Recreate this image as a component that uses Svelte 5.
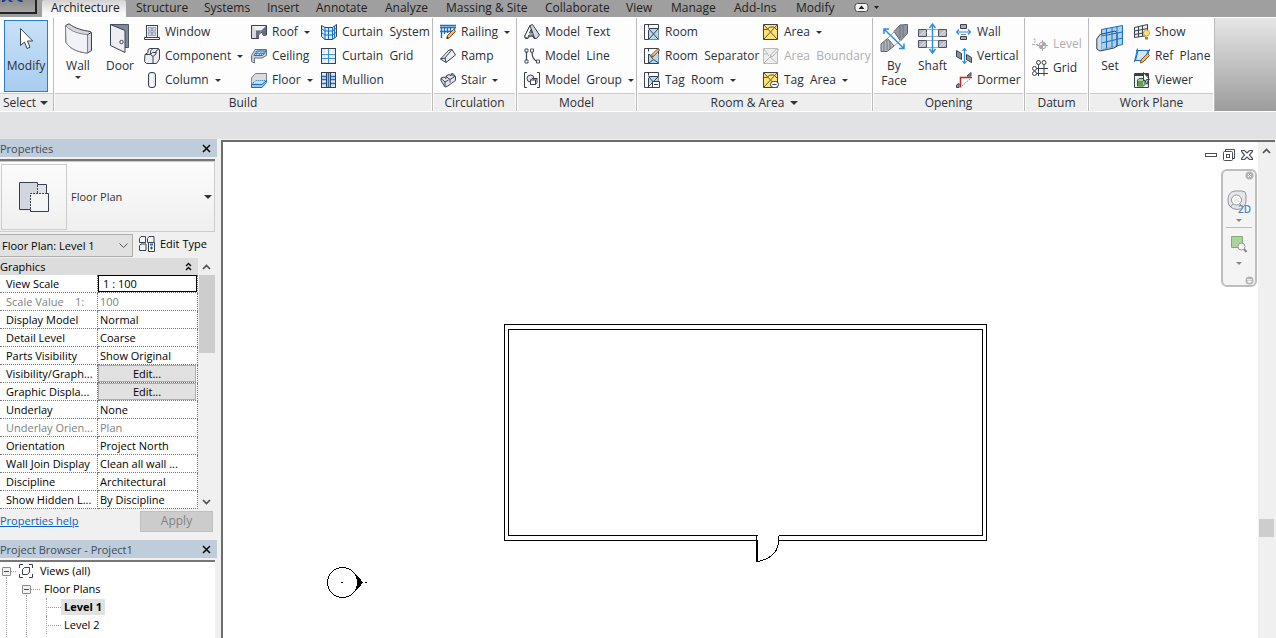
<script>
  const D = '#39404f';
  const B = '#1b6ec2';
  const glyphs = {
    window: `<rect x="2.5" y="1.5" width="11" height="12" fill="#eef0f3" stroke="${D}"/><path d="M4.5 3.5h3v3.500h-3zM8.500 3.500h3v3.500h-3zM4.500 8h3v3.500h-3zM8.500 8h3v3.500h-3z" fill="#cfd6e2" stroke="#8a92a0" stroke-width=".8"/><path d="M.5 13.500h15v2H.5z" fill="#fff" stroke="${D}"/>`,
    component: `<path d="M1 6.500 4 4.500v-3L6 .5h8.500l1 1.500v9l-3 4.500H2.500L.5 13.500z" fill="#eceef1" stroke="${D}"/><path d="M1 6.500h5.500V3l2-2M6.500 6.500l2.500 2V15M9 8.500 12 6V3l3-2M6.500 6.500 8.500 4.500H12" fill="none" stroke="${D}"/>`,
    column: `<rect x="4.500" y=".5" width="7" height="15" rx="2.500" fill="#e3e6ea" stroke="${D}"/><rect x="6.500" y="2.500" width="2.500" height="12" fill="#fff"/>`,
    roof: `<path d="M.5 1.500h15v9.500l-3 .5-2-3.500-3 3v3.500H.5z" fill="#aeb4bf" stroke="${D}"/><path d="M1 2h14l-5 4.500H5z" fill="#f1f2f5"/><path d="M1 2l4 4.500V14H1z" fill="#d7dae0"/><path d="M5 6.500h5.500L7.500 10v4H5zM15 2v9l-2.500.5L10 7z" fill="#69707f"/>`,
    ceiling: `<path d="M.5 7.500 4 1.500h11.500v6L11 10H3.500v5l-3-1.500z" fill="#c9cdd4" stroke="#6a707c"/><path d="M3 7.500 6 3h9l-3.500 4.500z" fill="#cbe6fc" stroke="${B}"/><path d="M5 5.500h8.500M7.500 3.500 5 7M10.500 3.500 8 7M13 3.500 10 7" stroke="${B}" stroke-width=".7"/>`,
    floor: `<path d="M.5 9.500V6l4-4.500h11v8L11 14.500l-10.500 1z" fill="#d9dce1" stroke="#7a808b"/><path d="M.5 12 5 8.500h10.500L11 12.500z" fill="#c2e1fb" stroke="${B}" stroke-dasharray="1 1"/><path d="M.5 12.500v3H11l4.500-5V8.500L11 12.500z" fill="#9fc9ec" stroke="${B}"/>`,
    csystem: `<path d="M.5 1.500 4 3.500h7.500L15.500.5v12l-4 3H4l-3.500-3z" fill="#d5eafb" stroke="${D}"/><path d="M4 3.500v12M7.500 3.500v12M11.500 3.500v12M13.500 2v12M1 5l3 2h7.500l4-3M1 9l3 2h7.500l4-3" fill="none" stroke="${B}"/>`,
    cgrid: `<rect x=".5" y=".5" width="14" height="15" fill="#e5e8ec" stroke="${D}"/><path d="M5.500 1v14M10.500 1v14M1 5.500h13M1 10.500h13" stroke="#fff"/><path d="M7.500 1v14M1 6.500h13M1 10.500h13" stroke="#3a8fdf"/>`,
    mullion: `<rect x=".5" y=".5" width="14" height="15" fill="#dfe5ec" stroke="${D}"/><path d="M1 4.500h13M1 7.500h13M1 11.500h13" stroke="${B}" stroke-width="1.500"/><path d="M5.500 1v14M9.500 1v14" stroke="${D}"/><path d="M6 1h3v14H6z" fill="#86bff0"/><path d="M7.500 1v14" stroke="${B}"/>`,
    railing: `<path d="M0 1.500h16M0 3.500h16M1.500 4v10M4.500 4v6M7.500 4v5M10.500 4v4M14.500 4v4M0 7.500h12" stroke="${B}" stroke-width="1.400"/><path d="m7 14.500.5-3 6-6 2 2-6 6z" fill="#f8b96a" stroke="#7d4a1b"/><path d="m6.500 15 .5-2.500 2 2z" fill="#222"/>`,
    ramp: `<path d="M.5 11 9 2l3-.5L15.500 7 6 14.500z" fill="#eceef1" stroke="${D}"/><path d="M.5 11 5 10l7-8.500M5 10l1 4.500" fill="none" stroke="${D}"/>`,
    stair: `<path d="M1 8.500V6l3-1 2 1.500V4l3-1.500 2 1.500V2l2-.5 2.500 3v4L7 14.500l-2 .5z" fill="#e4e6ea" stroke="${D}"/><path d="M1 6.500 5 10v4M6 4.500l4 3v3M11 2l4 3M5 10l3.500-2M10 7.500 14 5" fill="none" stroke="${D}"/>`,
    mtext: `<path d="M.5 12.500 6 1.500 8.500.5l7 10.500-3 3.500h-2.500L9 12l-3.500.5L4 14.500H1.500z" fill="#d4d7dd" stroke="${D}"/><path d="M.5 12.500 6 1.500l4.500 12.500L9 11H5l-1.500 3.500z" fill="#fff" stroke="${D}"/><path d="M5.500 9 7 5.500 8 9z" fill="#d4d7dd" stroke="${D}"/>`,
    mline: `<path d="M2.500 3v11M8 2.500c0 6 1 9.500 6 11" fill="none" stroke="${D}" stroke-width="1.200"/><path d="M1 1h3v3H1zM1 12h3v3H1zM6.500 1h3v3h-3zM12.500 12h3v3h-3z" fill="#fff" stroke="${D}" stroke-width=".9"/>`,
    mgroup: `<path d="M3 .5H.5v15H3M13 .5h2.500v15H13" fill="none" stroke="${D}"/><circle cx="6.500" cy="6.500" r="3.500" fill="#e4e6ea" stroke="${D}"/><path d="M6.500 8 8 6.500h5v4l-1.500 2h-5zM6.500 8h5l1.500-1.500M11.500 8v4.500" fill="#fff" stroke="${D}"/>`,
    room: `<path d="M.5.5h14v15H.5z" fill="#fff" stroke="${D}"/><path d="M4.500 4.500h10v11h-10z" fill="#b7d9ef"/><path d="M4.500.5v3M4.500 6v9.500M4.500 4.500h10M5 5l9 10M14 5 5 15" stroke="${D}" fill="none"/>`,
    roomsep: `<path d="M.5.5h14v15H.5z" fill="#fff" stroke="${D}"/><path d="M4.500 6h10v9h-10z" fill="#b7d9ef"/><path d="M4.500.5v3M4.500 6v9.500M5 15l4.500-3.500 5 3.500M5 6l4 5" stroke="${D}" fill="none"/><path d="m7.500 9 .5-2.500L14 .5 15.500 2 10 8z" fill="#f8c98a" stroke="#7d4a1b"/>`,
    tagroom: `<path d="M.5.5h14v15H.5z" fill="#fff" stroke="${D}"/><path d="M4.500 4.500h10v7h-10z" fill="#b7d9ef"/><path d="M4.500.5v3M4.500 6v9.500M4.500 4.500h10M5 5l5 6M14 5l-9 9" stroke="${D}" fill="none"/><path d="M8.500 9.500h7v6h-7z" fill="#fff" stroke="${D}"/><path d="M10 12.500h4" stroke="${D}"/>`,
    area: `<path d="M.5.5h14v15H.5z" fill="#ffe27a" stroke="${D}"/><path d="M1 1l13 14M14 1 1 15M1 5.500h3L7 3h4l3 3" stroke="#6b5a24" fill="none"/>`,
    areabound: `<path d="M.5.5h14v15H.5z" fill="#eee" stroke="#bbb"/><path d="M1 15l6-6 7 6M1 1l5 7M1 6h4" stroke="#bbb" fill="none"/><path d="m7.500 9 .5-2.500L14 .5 15.500 2 10 8z" fill="#f5f5f5" stroke="#aaa"/>`,
    tagarea: `<path d="M.5.5h14v15H.5z" fill="#ffe27a" stroke="${D}"/><path d="M1 1l13 14M14 1 1 15M1 5.500h3L7 3h4l3 3" stroke="#6b5a24" fill="none"/><rect x="7.500" y="9.500" width="8" height="6" rx="3" fill="#fff" stroke="${D}"/><path d="M9.500 12.500h4" stroke="${D}"/>`,
    owall: `<path d="M4.500.5h6v4h-6zM4.500 12.500h6v3h-6z" fill="#a6abb4" stroke="${D}"/><path d="M5 10.500h5" stroke="#888"/><path d="M0 8h15M3 5.500 .5 8 3 10.500M12 5.500 14.500 8 12 10.500" stroke="#2b8ae8" stroke-width="1.200" fill="none"/>`,
    overt: `<path d="m.5 2.500 5 3v6l-5-3zM10.500 6.500l5 3v5l-5-3z" fill="#8c929d" stroke="${D}"/><path d="M8.500 1v14M6.500 3l2-2.500 2 2.500M6.500 13l2 2.500 2-2.500" stroke="#2b8ae8" stroke-width="1.200" fill="none"/>`,
    dormer: `<path d="m11 4 4-3.500V4zM.5 15.500V13L3 11.500v4z" fill="#9da2ac" stroke="${D}"/><path d="M4.500 15.500V5.500H16" stroke="#c3261d" stroke-width="1.500" fill="none"/><path d="m6 14 8-7" stroke="#999" stroke-dasharray="2 1"/>`,
    level: `<path d="M0 8.500h6M1.500 3.500 3 2.500V7" stroke="#aaa" fill="none" stroke-dasharray="3 1"/><circle cx="10.500" cy="9.500" r="3.500" fill="#f3f3f3" stroke="#aaa"/><path d="M7 9.500h3.500V6A3.500 3.500 0 0 1 14 9.500h-3.500V13A3.500 3.500 0 0 1 7 9.500z" fill="#aaa"/><path d="M10.500 4v11M5 9.500h11" stroke="#aaa"/>`,
    grid: `<path d="M6.500 4v12M12 4v12M4 8.500h12M4 13.500h12" stroke="${D}"/><g fill="#fff" stroke="${D}"><circle cx="6.500" cy="2.500" r="2"/><circle cx="12" cy="2.500" r="2"/><circle cx="2.500" cy="8.500" r="2"/><circle cx="2.500" cy="13.500" r="2"/></g>`,
    show: `<path d="M.5 3.500 13.500.5v11l-13 2z" fill="#eceef1" stroke="${D}"/><path d="M4.500 3v10M8.500 2v10M.5 7l13-2.500M.5 10.500 12 8.500" stroke="${D}" fill="none"/><circle cx="12.500" cy="9" r="3" fill="#ffe27a" stroke="#ec9a2e"/><path d="M11 13h3v2.500h-3z" fill="#7b8594"/>`,
    refplane: `<path d="M4 2.500h10L11 12.500H1.500z" fill="#cfe7fa" stroke="${B}"/><path d="M3.500.5.5 14M15.500 1 14 6M2 2.500h14M0 12.500h7" stroke="${B}" fill="none"/><path d="m6.500 15 .5-3 6.500-6.500 2 2L9 14z" fill="#f8b96a" stroke="#7d4a1b"/>`,
    viewer: `<path d="M.5 1.500h14v14H.5z" fill="#eef1ee" stroke="${D}"/><path d="M1 2.500h13" stroke="${D}" stroke-width="3"/><path d="M3.500 8 5 6.500h6v6L9.500 14h-6z" fill="#a9d59e" stroke="#2f5b2a"/><path d="M4 9h5v4.500H4z" fill="#5d9e50"/><path d="m9.500.5 6 7h-3l1.500 4-1.500.5-1.500-4L9.500 9z" fill="#fff" stroke="${D}"/>`
  };
  const big = {
    modify: `<path d="M10.500 2.500v17l4-3.500 2.500 6.500 3-1.300-2.600-6.200h5.300z" fill="#fff" stroke="#3c4454"/>`,
    wall: `<path d="M1.500 2.500 5 .8C11 5.500 19 7.500 26.500 8.500l1 1.500v17.500l-4 2.500C15 29.500 6 26 2 19.500z" fill="#d5d9df" stroke="${D}"/><path d="M1.500 2.500C7 8.500 15 11 23.500 11.500V30C15 29.500 6 26 2 19.500z" fill="#f1f2f5" stroke="#7e8591"/><path d="m23.500 11.500 4-2" stroke="${D}"/>`,
    door: `<path d="M4.500 1.500h18v23h-4V8z" fill="#828997" stroke="#4d5463"/><path d="M4.500 1.500 19 7.500v22L4.500 22.500z" fill="#eceef1" stroke="${D}"/><circle cx="15.500" cy="19" r="1.700" fill="#fff" stroke="${D}"/>`,
    byface: `<path d="M14 8.500 20 2l7.500-.5v9L20.500 18z" fill="#9297a1" stroke="#5d6370"/><path d="M1 21 7.500 15.500 14 23l-7 5.500H1z" fill="#b3b7bf" stroke="#5d6370"/><path d="M20 3v12M23 2v12M4 19v9M7 17v10M10 18v8" stroke="#70757f"/><path d="m8 15 7-7M14 23l7-6" stroke="#aaa"/><path d="M4.500 6.500 24 25.500M4 11V6h5M24 20.500v5h-5" stroke="#2b8ae8" stroke-width="1.500" fill="none"/>`,
    shaft: `<g fill="#b3b7bf" stroke="#4d5463"><path d="M.5 6.500h8v7h-8zM20.500 6.500h8v7h-8zM.5 17.500h8v7h-8zM20.500 17.500h8v7h-8z"/></g><path d="m2 12.500 5-5M5 12.500l3-3M22 12.500l5-5M25 12.500l3-3M2 23.500l5-5M5 23.500l3-3M22 23.500l5-5M25 23.500l3-3" stroke="#f3f3f3"/><path d="M9 6.500h11M9 13.500h11M9 17.500h11M9 24.500h11" stroke="#aaa"/><path d="M14.500 1.500v28M11.500 5l3-4 3 4M11.500 26l3 4 3-4" stroke="#2b8ae8" stroke-width="1.400" fill="none"/>`,
    set: `<path d="M5.500 6.500 26.500 2.500v19l-21 5z" fill="#a9d3f3" stroke="${B}"/><path d="M.8 16 4 11.500l15-3.500 2 2v13l-3 2-14 3-3.200-2z" fill="#b4cfe6" fill-opacity=".7" stroke="${D}"/><path d="M10.500 5.500v20M16 4.500v20M21 3.500v20M5.500 13l21-4M5.500 20l21-5" stroke="${B}" fill="none"/>`
  };
  const svg = (body, w, h) => `<svg width="${w}" height="${h}" viewBox="0 0 ${w} ${h}" aria-hidden="true" style="display:block">${body}</svg>`;

  const tabs = ['Architecture', 'Structure', 'Systems', 'Insert', 'Annotate', 'Analyze', 'Massing & Site', 'Collaborate', 'View', 'Manage', 'Add-Ins', 'Modify'];
  const panels = [
    { id: 'build', title: 'Build', large: [['wall', 'Wall', true], ['door', 'Door']], cols: [
      [['window', 'Window'], ['component', 'Component', 1], ['column', 'Column', 1]],
      [['roof', 'Roof', 1], ['ceiling', 'Ceiling'], ['floor', 'Floor', 1]],
      [['csystem', 'Curtain  System'], ['cgrid', 'Curtain  Grid'], ['mullion', 'Mullion']]] },
    { id: 'circulation', title: 'Circulation', large: [], cols: [[['railing', 'Railing', 1], ['ramp', 'Ramp'], ['stair', 'Stair', 1]]] },
    { id: 'model', title: 'Model', large: [], cols: [[['mtext', 'Model  Text'], ['mline', 'Model  Line'], ['mgroup', 'Model  Group', 1]]] },
    { id: 'room', title: 'Room & Area', menu: true, large: [], cols: [
      [['room', 'Room'], ['roomsep', 'Room  Separator'], ['tagroom', 'Tag  Room', 1]],
      [['area', 'Area', 1], ['areabound', 'Area  Boundary', 0, true], ['tagarea', 'Tag  Area', 1]]] },
    { id: 'opening', title: 'Opening', large: [['byface', 'By Face'], ['shaft', 'Shaft']], cols: [[['owall', 'Wall'], ['overt', 'Vertical'], ['dormer', 'Dormer']]] },
    { id: 'datum', title: 'Datum', large: [], cols: [[['level', 'Level', 0, true], ['grid', 'Grid']]] },
    { id: 'workplane', title: 'Work Plane', large: [['set', 'Set']], cols: [[['show', 'Show'], ['refplane', 'Ref  Plane'], ['viewer', 'Viewer']]] }
  ];
  const rows = [
    ['View Scale', '1 : 100', 'input'],
    ['Scale Value    1:', '100', 'off'],
    ['Display Model', 'Normal'],
    ['Detail Level', 'Coarse'],
    ['Parts Visibility', 'Show Original'],
    ['Visibility/Graph...', 'Edit...', 'button'],
    ['Graphic Displa...', 'Edit...', 'button'],
    ['Underlay', 'None'],
    ['Underlay Orien...', 'Plan', 'off'],
    ['Orientation', 'Project North'],
    ['Wall Join Display', 'Clean all wall ...'],
    ['Discipline', 'Architectural'],
    ['Show Hidden L...', 'By Discipline']
  ];
  let active = $state('Architecture');
</script>

<div class="app">
  <header>
    <nav class="tabs" aria-label="Ribbon tabs">
      <button class="logo" aria-label="Application menu">{@html svg('<path d="M2 0h4L4 2H2zM8 0h3l2 2h-3zM17 0h5l1 2h-3z" fill="#193a94"/>', 34, 12)}</button>
      {#each tabs as t}
        <button class="tab" class:active={active === t} onclick={() => (active = t)}>{t}</button>
      {/each}
      <button class="collapse" aria-label="Minimize ribbon">{@html svg('<rect x="1" y="1.500" width="13" height="8" rx="2.500" fill="#f2f2f2" stroke="#454b58"/><path d="m4.500 7 3-3.500 3 3.500zM20 4h5l-2.500 3z" fill="#222"/>', 26, 11)}</button>
    </nav>

    <div class="ribbon">
      <section class="panel select">
        <div class="body">
          <button class="modify">{@html svg(big.modify, 32, 26)}<span>Modify</span></button>
        </div>
        <h2>Select <i class="arrow wide"></i></h2>
      </section>
      {#each panels as p}
        <section class="panel {p.id}">
          <div class="body">
            {#each p.large as [icon, label, menu]}
              <button class="large">{@html svg(big[icon], 29, 32)}<span>{label}</span>{#if menu}<i class="arrow"></i>{/if}</button>
            {/each}
            {#each p.cols as col}
              <div class="col">
                {#each col as [icon, label, menu, off]}
                  <button class="tool" disabled={off}>{@html svg(glyphs[icon], 16, 16)}<span>{label}</span>{#if menu}<i class="arrow"></i>{/if}</button>
                {/each}
              </div>
            {/each}
          </div>
          <h2>{p.title}{#if p.menu}<i class="arrow wide"></i>{/if}</h2>
        </section>
      {/each}
    </div>
    <div class="options"></div>
  </header>

  <main>
    <aside>
      <section class="dock">
        <div class="caption"><h3>Properties</h3><button aria-label="Close Properties">{@html svg('<path d="m1 1 7 7M8 1 1 8" stroke="#000" stroke-width="1.500"/>', 9, 9)}</button></div>
        <div class="props">
          <button class="type">
            <span class="preview">{@html svg('<path d="M2.500 2.500h18v28h-18z" fill="#d3d6dd"/><path d="M20.500 4.500h9v9h-9z" fill="#dfe2e8"/><path d="M13.500 13.500h18v18h-18z" fill="#f4f5f7"/><path d="M13.500 29.500h-11v-27h18v2h9v9M29.500 13.500h2v18h-18v-2" fill="none" stroke="#39404f"/><path d="M20.500 5v8M13.500 29V13.500H30" fill="none" stroke="#39404f" stroke-dasharray="2 1"/>', 34, 34)}</span>
            <span class="name">Floor Plan</span><i class="arrow wide"></i>
          </button>
          <div class="instance">
            <div class="combo">
              <select aria-label="Instance"><option>Floor Plan: Level 1</option></select>
              {@html svg('<path d="m.5.5 4 4 4-4" fill="none" stroke="#555"/>', 9, 6)}
            </div>
            <button class="edit-type">{@html svg(`<path d="M.5 2.500 2 .5h4.500v6h-6zM8.500 2.500 10 .5h5v6H8.500zM.5 9.500 2 8h5v6.500H.5z" fill="#f4f5f7" stroke="${D}"/><path d="M9.500 6.500h6v9h-6z" fill="#fff" stroke="${D}"/><path d="M11 8.500h3" stroke="${B}" stroke-width="2"/><path d="M11 12h3M12.500 10.500v3" stroke="${D}"/>`, 16, 16)}<span>Edit Type</span></button>
          </div>
          <div class="listing">
            <div class="sheet">
              <div class="group">Graphics<button aria-label="Collapse Graphics">{@html svg('<path d="m1 4 2.500-2.500L6 4M1 8l2.500-2.500L6 8" fill="none" stroke="#000" stroke-width="1.300"/>', 7, 9)}</button></div>
              <table>
                <tbody>
                  {#each rows as [name, value, kind]}
                    <tr class:off={kind === 'off'}>
                      <th scope="row">{name}</th>
                      <td>
                        {#if kind === 'input'}<input aria-label={name} {value} />
                        {:else if kind === 'button'}<button>{value}</button>
                        {:else}{value}{/if}
                      </td>
                    </tr>
                  {/each}
                </tbody>
              </table>
            </div>
            <div class="scroll">
              {@html svg('<path d="m1 5 3.500-3.500L8 5" fill="none" stroke="#505050" stroke-width="1.700"/>', 9, 6)}
              <div class="thumb"></div>
              {@html svg('<path d="m1 1 3.500 3.500L8 1" fill="none" stroke="#505050" stroke-width="1.700"/>', 9, 6)}
            </div>
          </div>
          <div class="foot"><a href="#help">Properties help</a><button disabled>Apply</button></div>
        </div>
      </section>

      <section class="dock browser">
        <div class="caption"><h3>Project Browser - Project1</h3><button aria-label="Close Project Browser">{@html svg('<path d="m1 1 7 7M8 1 1 8" stroke="#000" stroke-width="1.500"/>', 9, 9)}</button></div>
        <ul class="tree">
          <li>
            <div class="node"><button class="toggle" aria-label="Collapse Views"></button><i class="stub short"></i>{@html svg(`<path d="M4 .5H.5V4M10 .5h3.500V4M4 13.500H.5V10M10 13.500h3.500V10" fill="none" stroke="${D}"/><path d="M3.500 5.500 5.500 3.500h5v4.500l-2 2.500h-5z" fill="#fff" stroke="${D}"/>`, 14, 14)}<span class="views">Views (all)</span></div>
            <ul>
              <li>
                <div class="node"><button class="toggle" aria-label="Collapse Floor Plans"></button><i class="stub"></i><span>Floor Plans</span></div>
                <ul>
                  <li><div class="node"><i class="stub long"></i><b>Level 1</b></div></li>
                  <li><div class="node"><i class="stub long"></i><span class="leaf">Level 2</span></div></li>
                </ul>
              </li>
            </ul>
          </li>
        </ul>
      </section>
    </aside>

    <div class="view">
      <div class="canvas">
        <svg class="drawing" aria-label="Level 1 floor plan" shape-rendering="crispEdges">
          <g fill="none" stroke="#000">
            <path d="M534.500 398.500H281.500V182.500H763.500V398.500H555.500M534.500 393.500H285.500V187.500H759.500V393.500H555.500M555.500 393.500V399M533.500 393.500V399"/>
            <path d="M534 398.500V420" stroke-width="2"/>
            <path d="M535 419.500Q555.500 415 555.500 398.500"/>
            <circle cx="119.500" cy="440.500" r="15"/>
            <path d="M118 440.500h2M142 440.500h2"/>
          </g>
          <path d="m133 432 7 8.500-7 8.500q3-8.500 0-17z"/>
        </svg>
        <div class="controls">
          <button aria-label="Minimize view">{@html svg('<rect x=".5" y="4.500" width="11" height="3" fill="#fff" stroke="#4b4f58"/>', 12, 12)}</button>
          <button aria-label="Restore view">{@html svg('<path d="M2.500 2.500v-2h9v9h-2" fill="#fff" stroke="#4b4f58"/><rect x=".5" y="2.500" width="9" height="9" rx="1" fill="#fff" stroke="#4b4f58"/><rect x="3.500" y="5.500" width="3" height="3" fill="none" stroke="#4b4f58"/>', 12, 12)}</button>
          <button aria-label="Close view">{@html svg('<path d="M.5 1.500h3L6 4l2.500-2.500h3v1L8.500 6l3 3.500v1h-3L6 8l-2.500 2.500h-3v-1l3-3.500-3-3.500z" fill="#fff" stroke="#4b4f58" stroke-width="1.200"/>', 12, 12)}</button>
        </div>
        <div class="navbar">
          <button aria-label="Close navigation bar">{@html svg('<circle cx="4.500" cy="4.500" r="4" fill="#b5b5b5"/><path d="m3 3 3 3M6 3 3 6" stroke="#fff"/>', 9, 9)}</button>
          <button class="wheel" aria-label="Steering wheel 2D">{@html svg('<path d="M1 10.500C1 4 4 1 9.500 1H15q4 0 4 4v6q-1 8-9 8.500-9-1-9-9z" fill="#e6e7ea" stroke="#8f949c"/><circle cx="9.500" cy="10" r="5" fill="#fff" stroke="#8f949c"/><circle cx="9.500" cy="10" r="3" fill="#eee"/><path d="m6 14-2.500 3M13 14l2 2" stroke="#8f949c"/>', 24, 24)}<span>2D</span></button>
          <i class="arrow pale"></i>
          <hr />
          <button class="zoom" aria-label="Zoom">{@html svg('<path d="M.5.5h11v11H.5z" fill="#acd2a0" stroke="#7bb06d"/><path d="m12.500 12.500 3 3.500" stroke="#888" stroke-width="2"/><circle cx="10.500" cy="10.500" r="3.500" fill="#f5f5f5" stroke="#999"/>', 17, 17)}</button>
          <i class="arrow pale"></i>
          <button class="more" aria-label="Customize navigation bar">{@html svg('<circle cx="4.500" cy="4.500" r="4" fill="#b5b5b5"/><path d="M2 3.500h5M2.500 5h4l-2 2z" stroke="#fff" fill="#fff" stroke-width=".7"/>', 9, 9)}</button>
        </div>
      </div>
      <div class="vscroll">{@html svg('<path d="m1 5 3.500-3.500L8 5" fill="none" stroke="#505050" stroke-width="1.700"/>', 9, 6)}<div class="thumb"></div></div>
    </div>
  </main>
</div>

<style>
  :global(body) { margin: 0; overflow: hidden; }
  .app { display: flex; flex-direction: column; height: 100vh; font: 12px/16px "Open Sans", "Noto Sans", sans-serif; color: #2b2f38; background: #f0f0f0; }
  .app * { box-sizing: border-box; }
  button { font: inherit; color: inherit; background: none; border: 0; padding: 0; margin: 0; }
  h2, h3 { font: inherit; margin: 0; }
  ul { list-style: none; margin: 0; padding: 0; }
  .arrow { width: 0; height: 0; border: 3px solid transparent; border-top: 3px solid #333; border-bottom: 0; flex: none; }
  .arrow.wide { border-width: 4px 4px 0; }
  .arrow.pale { border-top-color: #888; }

  .tabs { display: grid; grid-template-columns: 42px 84px 68px 63px 49px 69px 61px 99px 81px 45px 63px 62px 60px 40px; height: 17px; background: #9f9f9f; }
  .tab { text-align: left; padding: 0 0 2px 10px; white-space: nowrap; line-height: 15px; color: #222; }
  .tab.active { background: linear-gradient(#d2d2d2, #fafafa 80%); padding-left: 9px; border-radius: 2px 2px 0 0; }
  .logo { width: 37px; height: 14px; background: linear-gradient(#8c8c8c, #a5a5a5); border: solid #222; border-width: 0 2px 2px 0; overflow: hidden; display: flex; align-items: flex-start; }
  .collapse { padding-left: 8px; align-self: start; padding-top: 2px; }

  .ribbon { display: flex; height: 95px; background: linear-gradient(#e6e6e6, #9c9c9c); border-top: 1px solid #fff; border-bottom: 1px solid #fff; }
  .panel { flex: none; display: flex; flex-direction: column; background: #fdfdfd; border-right: 1px solid #bbb; }
  .body { flex: 1; display: grid; padding: 2px 0 0 2px; align-items: start; }
  .panel h2 { height: 18px; display: flex; align-items: center; justify-content: center; gap: 6px; margin: 0 1px; border-top: 1px solid #ccc; background: #eee; white-space: nowrap; }
  .select { width: 54px; }
  .select .body { padding-left: 4px; }
  .select h2 { margin: 0; justify-content: flex-start; gap: 4px; padding-left: 3px; }
  .build { width: 379px; } .build .body { padding-left: 1px; grid-template-columns: 46px 38px 107px 70px 1fr; }
  .circulation { width: 84px; }
  .model { width: 120px; }
  .room { width: 236px; } .room .body { grid-template-columns: 119px 1fr; }
  .opening { width: 152px; } .opening .body { padding-left: 1px; grid-template-columns: 40px 37px 1fr; }
  .datum { width: 64px; } .datum .col { padding-top: 12px; }
  .workplane { width: 126px; } .workplane .body { grid-template-columns: 38px 1fr; }
  .modify { width: 44px; height: 72px; background: linear-gradient(#c7e0f7, #a9cdf0); border: 1px solid #2c7cc9; display: flex; flex-direction: column; align-items: center; padding-top: 5px; gap: 6px; }
  .large { display: flex; flex-direction: column; align-items: center; padding-top: 3px; gap: 3px; line-height: 15px; }
  .col { display: grid; grid-auto-rows: 24px; padding-left: 5px; }
  .tool { display: flex; align-items: center; gap: 5px; white-space: pre; text-align: left; }
  .tool .arrow { margin-left: 1px; }
  .tool:disabled { color: #b0b0b0; }
  .options { height: 27px; background: #e0e2e4; }

  main { flex: 1; display: flex; min-height: 0; }
  aside { width: 221px; flex: none; padding-right: 4px; font-size: 11px; color: #000; display: flex; flex-direction: column; gap: 5px; }
  .caption { height: 18px; display: flex; justify-content: space-between; align-items: center; background: #bfcddb; color: #414b57; padding: 1px 6px 0 0; margin-bottom: 2px; }
  .props, .tree { border-top: 2px solid #777; margin-right: 2px; }
  .type { display: flex; align-items: center; width: 100%; height: 71px; padding: 0 2px 0 1px; border: 1px solid #ccc; border-left: 0; background: linear-gradient(#fcfcfc, #efefef); text-align: left; color: #333; }
  .preview { width: 66px; height: 66px; display: grid; place-items: center; border: 1px solid #ccc; }
  .name { flex: 1; padding-left: 4px; }
  .instance { display: flex; gap: 6px; height: 26px; align-items: flex-start; padding-top: 2px; }
  .combo { position: relative; width: 133px; }
  .combo select { display: block; appearance: none; width: 100%; height: 23px; font: inherit; color: #000; background: #e1e1e1; border: 1px solid #adadad; border-left: 0; border-radius: 0; padding: 0 18px 0 2px; }
  .combo :global(svg) { position: absolute; right: 5px; top: 9px; pointer-events: none; }
  .edit-type { display: flex; gap: 5px; align-items: center; height: 20px; }
  .listing { display: flex; height: 251px; }
  .sheet { flex: 1; background: #fff; overflow: hidden; }
  .group { height: 17px; background: #dcdcdc; display: flex; justify-content: space-between; align-items: center; padding-right: 6px; }
  table { width: 100%; table-layout: fixed; border-collapse: separate; border-spacing: 0; }
  tr { height: 18px; }
  th, td { font-weight: 400; text-align: left; height: 18px; line-height: 16px; padding: 0; border: 0 dotted #777; border-width: 0 1px 1px 0; white-space: pre; overflow: hidden; }
  th { width: 98px; padding-left: 6px; }
  td { padding-left: 2px; }
  .off { color: #808080; }
  td:has(input), td:has(button) { padding: 0; }
  td input { display: block; width: 100%; height: 17px; font: inherit; border: 1px solid #000; padding: 0 4px; background: #fff; }
  td button { display: block; width: 98px; height: 17px; line-height: 14px; background: #e1e1e1; border: 1px solid #adadad; outline: 0; }
  .scroll { width: 17px; background: #f0f0f0; display: flex; flex-direction: column; align-items: center; padding: 6px 0 4px; }
  .scroll .thumb { width: 16px; height: 78px; margin: 5px 0 auto; background: #cdcdcd; }
  .foot { height: 26px; display: flex; justify-content: space-between; align-items: center; padding: 0 2px 2px 0; }
  .foot a { color: #0a64c4; }
  .foot button { width: 73px; height: 21px; background: #ccc; border: 1px solid #bfbfbf; color: #838383; font-size: 12px; }
  .browser { flex: 1; display: flex; flex-direction: column; }
  .tree { flex: 1; background: #fff; }
  .tree li { position: relative; }
  .node { display: flex; align-items: center; height: 18px; }
  .tree > li > .node { padding-left: 2px; }
  .tree ul { padding-left: 20px; }
  .tree ul .node { padding-left: 2px; }
  .tree ul ul .node { padding-left: 6px; }
  .tree > li > ul::before, .tree ul ul::before { content: ""; position: absolute; left: 6px; top: 15px; height: 64px; border-left: 1px dotted #999; }
  .tree ul ul li::before { content: ""; position: absolute; left: 6px; top: 0; height: 18px; border-left: 1px dotted #999; }
  .toggle { width: 9px; height: 9px; border: 1px solid #8a8a8a; border-radius: 1px; background: linear-gradient(#1d4f9c, #1d4f9c) center / 5px 1px no-repeat, #f3f3f3; flex: none; }
  .stub { width: 9px; border-top: 1px dotted #999; margin-right: 4px; }
  .stub.short { width: 5px; margin: 0 3px 0 0; }
  .stub.long { width: 15px; margin: 0; }
  .views { padding-left: 7px; }
  .leaf, b { padding: 0 3px; }
  b { background: #e1e1e1; line-height: 16px; }

  .view { flex: 1; min-width: 0; display: flex; background: #fff; border: 2px solid #6c6c6c; border-width: 2px 0 0 2px; margin: 1px 1px 0 0; }
  .canvas { flex: 1; position: relative; }
  .drawing { position: absolute; inset: 0; width: 100%; height: 100%; }
  .controls { position: absolute; right: 5px; top: 7px; display: flex; gap: 6px; }
  .navbar { position: absolute; right: 1px; top: 27px; width: 36px; height: 118px; border: 2px solid #bdbdbd; border-radius: 6px; background: #f4f4f4; display: flex; flex-direction: column; align-items: center; }
  .navbar > button:first-child, .navbar .more { align-self: flex-end; margin-right: 1px; }
  .wheel { position: relative; margin-top: 10px; }
  .wheel span { position: absolute; right: 0; bottom: 0; font-size: 10px; line-height: 10px; color: #4b84bd; font-weight: 600; }
  .navbar > .arrow { margin-top: 5px; }
  hr { width: 26px; margin: 5px 0 8px; border: 0; border-top: 1px solid #bbb; }
  .navbar .zoom + .arrow { margin-top: 9px; }
  .more { margin-top: auto; }
  .vscroll { width: 17px; background: #f0f0f0; display: flex; flex-direction: column; align-items: center; padding: 6px 0 101px; }
  .vscroll .thumb { width: 15px; height: 18px; margin-top: auto; background: #cdcdcd; }
</style>
